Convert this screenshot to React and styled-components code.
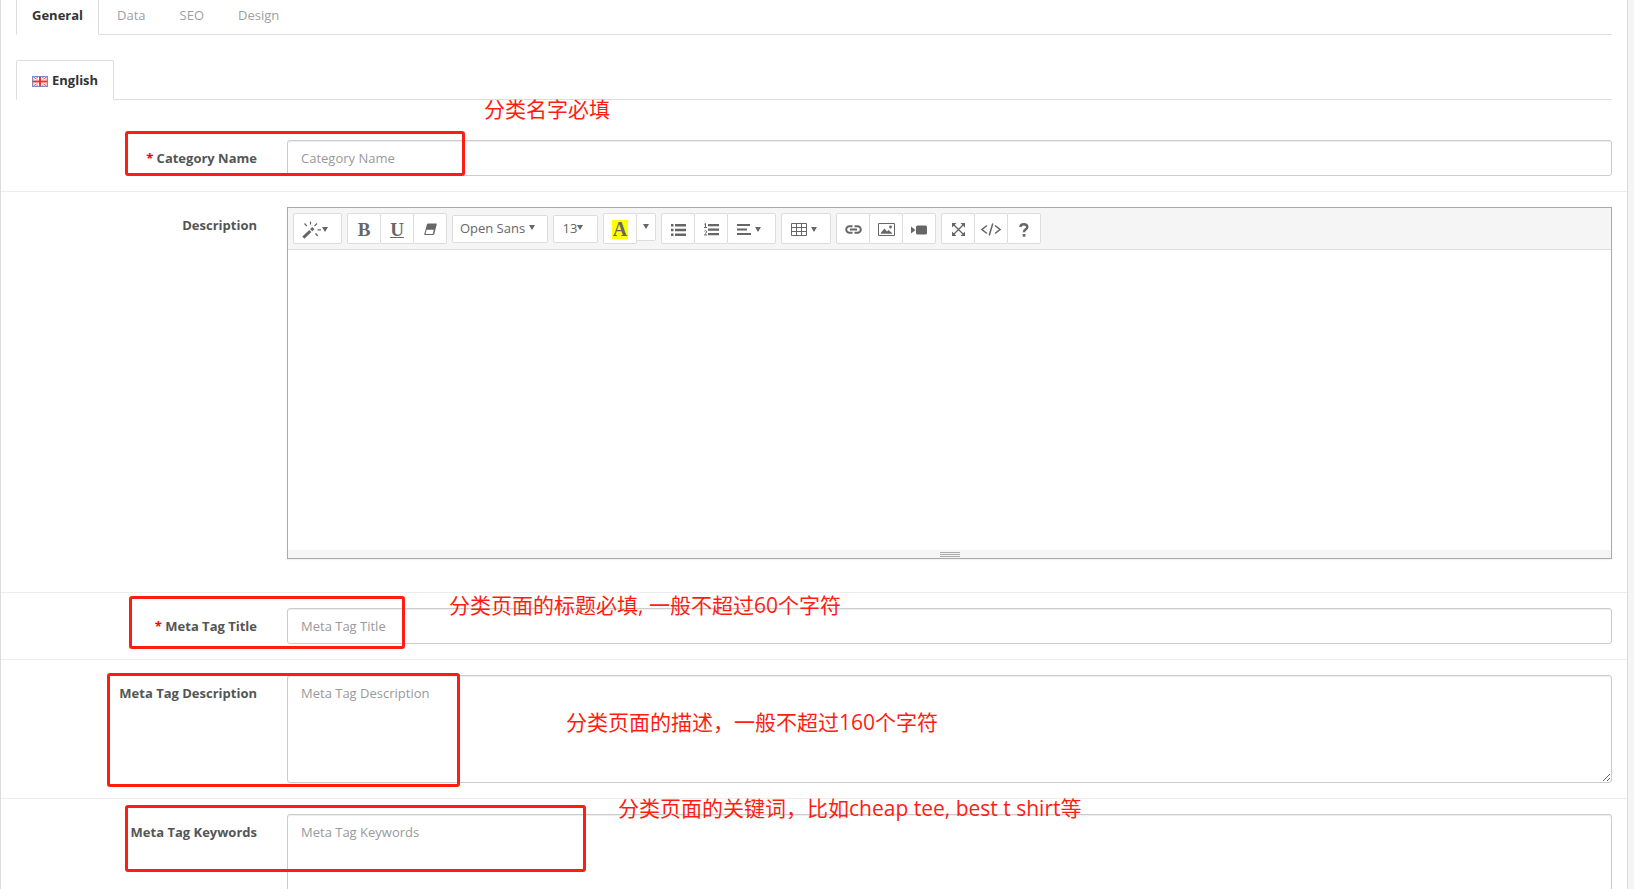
import React from 'react';
import styled, { createGlobalStyle } from 'styled-components';

const GlobalStyle = createGlobalStyle`
  * {
    box-sizing: border-box;
  }

  body {
    margin: 0;
    background: #f5f5f5;
    color: #666;
    font-family: 'Open Sans', 'Noto Sans CJK SC', sans-serif;
    font-size: 13px;
    line-height: 18px;
  }
`;

const Page = styled.div`
  height: 100vh;
  padding-right: 6px;
  overflow: hidden;
`;

const Panel = styled.main`
  position: relative;
  min-height: 100%;
  border: solid #dcdcdc;
  border-width: 0 1px;
  background: #fff;
`;

const Tabs = styled.nav`
  display: flex;
  gap: 2px;
  margin: 0 15px 25px;
  border-bottom: 1px solid #ddd;
`;

const Tab = styled.a`
  display: flex;
  align-items: center;
  gap: 4px;
  margin-bottom: -1px;
  padding: ${p => (p.$flush ? '6px' : '10px')} 15px 10px;
  border: 1px solid ${p => (p.$active ? '#ddd' : 'transparent')};
  border-top-width: ${p => (p.$flush ? 0 : '1px')};
  border-bottom-color: ${p => (p.$active ? '#fff' : 'transparent')};
  border-radius: ${p => (p.$flush ? 0 : '2px 2px 0 0')};
  background: ${p => (p.$active ? '#fff' : 'transparent')};
  color: ${p => (p.$active ? '#333' : '#a0a0a0')};
  font-weight: ${p => (p.$active ? 700 : 400)};
  text-decoration: none;
`;

const FormGroup = styled.div`
  display: grid;
  grid-template-columns: 1fr 5fr;
  padding: 15px 0;

  & + & {
    border-top: 1px solid #ededed;
  }
`;

const Label = styled.label`
  padding: 9px 15px 0;
  color: #555;
  font-weight: 700;
  text-align: right;
  white-space: nowrap;

  &::before {
    content: ${p => (p.$required ? "'* '" : 'none')};
    color: #f00;
  }
`;

const Field = styled.div`
  display: flex;
  flex-direction: column;
  min-width: 0;
  padding: 0 15px;
`;

const Input = styled.input`
  width: 100%;
  height: 36px;
  padding: 8px 13px;
  border: 1px solid #ccc;
  border-radius: 3px;
  background: #fff;
  box-shadow: inset 0 1px 1px rgba(0, 0, 0, 0.075);
  color: #555;
  font: inherit;

  &::placeholder {
    color: #999;
  }
`;

const TextArea = styled(Input).attrs({ as: 'textarea' })`
  display: block;
  height: 108px;
  resize: vertical;
`;

const Editor = styled.div`
  margin-bottom: 18px;
  border: 1px solid #a9a9a9;
  box-shadow: 0 1px 1px rgba(0, 0, 0, 0.05);
`;

const Toolbar = styled.div`
  display: flex;
  flex-wrap: wrap;
  gap: 5px;
  padding: 5px;
  border-bottom: 1px solid #ddd;
  background: #f5f5f5;
`;

const ButtonGroup = styled.div`
  display: flex;
  align-items: ${p => (p.$center ? 'center' : 'flex-start')};
`;

const ToolButton = styled.button`
  display: flex;
  align-items: center;
  justify-content: center;
  gap: ${p => p.$gap || 0}px;
  width: ${p => p.$width || 34}px;
  height: ${p => (p.$short ? 28 : 31)}px;
  padding: ${p => (p.$short ? '0 0 2px' : '2px 0 0')};
  padding-right: ${p => (p.$menu ? 5 : 0)}px;
  border: 1px solid #ddd;
  border-radius: 2px;
  background: #fff;
  color: #666;
  font: inherit;
  cursor: pointer;

  & + & {
    margin-left: -1px;
  }

  &:hover {
    background: #ebebeb;
  }
`;

const Glyph = styled.span`
  padding: 0 1px;
  background: ${p => (p.$highlight ? '#ff0' : 'transparent')};
  font-family: 'Liberation Serif', serif;
  font-size: ${p => (p.$highlight ? 20 : 19)}px;
  font-weight: 700;
  line-height: 19px;
`;

const Caret = styled.span`
  border: solid transparent;
  border-width: 5px 3px 0;
  border-top-color: #666;
`;

const EditArea = styled.div`
  height: 300px;
  outline: 0;
`;

const ResizeBar = styled.div`
  display: flex;
  flex-direction: column;
  align-items: center;
  gap: 1px;
  height: 8px;
  padding-top: 2px;
  background: #f5f5f5;
  cursor: ns-resize;
`;

const ResizeLine = styled.span`
  width: 20px;
  height: 1px;
  background: #a9a9a9;
`;

const Marker = styled.div`
  position: absolute;
  top: ${p => p.$top}px;
  left: ${p => p.$left}px;
  width: ${p => p.$width}px;
  height: ${p => p.$height}px;
  border: 3px solid #ff1d12;
  border-radius: 3px;
  pointer-events: none;
`;

const Note = styled.p`
  position: absolute;
  top: ${p => p.$top}px;
  left: ${p => p.$left}px;
  margin: 0;
  color: #ff1d12;
  font-size: 21px;
  line-height: 28px;
  white-space: nowrap;
  pointer-events: none;
`;

const Svg = styled.svg`
  display: block;
  flex: none;
  fill: currentColor;
`;

const Icon = ({ w = 16, h = 16, children }) => (
  <Svg width={w} height={h} viewBox={`0 0 ${w} ${h}`} aria-hidden="true">
    {children}
  </Svg>
);

const FlagIcon = () => (
  <Svg width="16" height="14" viewBox="0 -3 16 14" aria-hidden="true">
    <path fill="#8fa0dc" d="M0 0h16v11H0z" />
    <path stroke="#fff" strokeWidth="2.6" d="M1 .7l14 9.6M15 .7L1 10.300" />
    <path stroke="#f04a4a" d="M1 .7l14 9.600M15 .7L1 10.300" />
    <path fill="#fff" d="M6 0h4v11H6zM0 3.500h16v4H0z" />
    <path fill="#f63030" d="M7 0h2v11H7zM0 4.500h16v2H0z" />
    <path fill="none" stroke="#7480b8" d="M.5.5h15v10H.5z" opacity=".8" />
  </Svg>
);

const MagicIcon = () => (
  <Icon w={20} h={18}>
    <path d="M.3 15.500l7-6.600 2.100 2.200-7 6.600z" />
    <path d="M8.100 8.100l2.200-2 2.100 2.200-2.200 2z" />
    <path
      fill="none"
      stroke="currentColor"
      strokeWidth="1.200"
      d="M8.500.5v3M2.500 2.500l2.300 2.500M15 2.500l-2.500 2.500M15.500 8.800h3.500M13.500 12.500l2.300 2.500"
    />
  </Icon>
);

const EraserIcon = () => (
  <Icon w={13} h={13}>
    <path
      fillRule="evenodd"
      d="M4 .5h8.200q.8 0 .5.900l-2.500 9.800q-.3.800-1.100.8H.9Q0 12 .3 11.100L3 1.300Q3.200.5 4 .5zM2.600 6.800L1.500 10.900h7.300l1-4.100z"
    />
  </Icon>
);

const BulletListIcon = () => (
  <Icon w={15} h={12}>
    <path d="M0 0h2.500v2.500H0zM0 4.700h2.500v2.500H0zM0 9.500h2.500V12H0zM4 0h11v2.400H4zM4 4.800h11v2.400H4zM4 9.600h11V12H4z" />
  </Icon>
);

const NumberListIcon = () => (
  <Icon w={15} h={13}>
    <path d="M4 1h11v2.200H4zM4 5.500h11v2.200H4zM4 10h11v2.200H4z" />
    <path
      fill="none"
      stroke="currentColor"
      d="M.3 1.300L1.500.5v4M0 4.500h3M.3 8.500q.5-1 1.300-.9 1.200.2.900 1.300Q2 10.300.5 12H3"
    />
  </Icon>
);

const AlignIcon = () => (
  <Icon w={14} h={11}>
    <path d="M0 0h13v2H0zM0 4.500h10v2H0zM0 9h14v2H0z" />
  </Icon>
);

const TableIcon = () => (
  <Icon w={16} h={13}>
    <path fill="none" stroke="currentColor" d="M.5.5h15v12H.5zM0 4.500h16M0 8.500h16M5.500 0v13M10.500 0v13" />
  </Icon>
);

const LinkIcon = () => (
  <Icon w={17} h={9}>
    <path
      fill="none"
      stroke="currentColor"
      strokeWidth="2"
      d="M7.500 7.800H4.500a3.300 3.300 0 0 1 0-6.600h3M9.500 1.200h3a3.300 3.300 0 0 1 0 6.600h-3M5 4.500h7"
    />
  </Icon>
);

const PictureIcon = () => (
  <Icon w={17} h={13}>
    <path fill="none" stroke="currentColor" d="M.5.5h16v12H.5z" />
    <path d="M3 10.800V9.500l3.500-4 2.500 3 1.500-1.500 3.500 3v.8z" />
    <circle cx="12.500" cy="4" r="1.400" />
  </Icon>
);

const VideoIcon = () => (
  <Icon w={16} h={10}>
    <path d="M0 1.500L4.500 5 0 8.500z" />
    <rect x="5" y="0.500" width="11" height="9" rx="1.500" />
  </Icon>
);

const ExpandIcon = () => (
  <Icon w={13} h={13}>
    <path d="M0 0h4.500L0 4.500zM13 0v4.500L8.500 0zM0 13V8.500L4.500 13zM13 13H8.500L13 8.500z" />
    <path fill="none" stroke="currentColor" strokeWidth="1.400" d="M1 1l11 11M12 1L1 12" />
  </Icon>
);

const CodeIcon = () => (
  <Icon w={20} h={13}>
    <path fill="none" stroke="currentColor" strokeWidth="1.500" d="M6 2.500L1 6.500l5 4M14 2.500l5 4-5 4M11.800.5l-3.600 12" />
  </Icon>
);

const HelpIcon = () => (
  <Icon w={10} h={14}>
    <path
      fill="none"
      stroke="currentColor"
      strokeWidth="2.400"
      d="M1.200 4Q1.700 1.200 4.700 1.200 8.300 1.200 8.300 4q0 1.500-1.800 2.600Q5 7.500 5 9.300"
    />
    <path d="M3.700 11h2.700v2.700H3.700z" />
  </Icon>
);

const App = () => (
  <>
    <GlobalStyle />
    <Page>
      <Panel>
        <Tabs>
          <Tab href="#general" $flush $active>General</Tab>
          <Tab href="#data" $flush>Data</Tab>
          <Tab href="#seo" $flush>SEO</Tab>
          <Tab href="#design" $flush>Design</Tab>
        </Tabs>
        <Tabs>
          <Tab href="#english" $active>
            <FlagIcon />
            English
          </Tab>
        </Tabs>

        <form>
          <FormGroup>
            <Label htmlFor="name" $required>Category Name</Label>
            <Field>
              <Input id="name" placeholder="Category Name" />
            </Field>
          </FormGroup>

          <FormGroup>
            <Label id="description-label" as="span">Description</Label>
            <Field>
              <Editor>
                <Toolbar>
                  <ButtonGroup>
                    <ToolButton type="button" aria-label="Style" $width={49} $menu>
                      <MagicIcon />
                      <Caret />
                    </ToolButton>
                  </ButtonGroup>
                  <ButtonGroup>
                    <ToolButton type="button" aria-label="Bold"><Glyph>B</Glyph></ToolButton>
                    <ToolButton type="button" aria-label="Underline"><Glyph as="u">U</Glyph></ToolButton>
                    <ToolButton type="button" aria-label="Remove font style"><EraserIcon /></ToolButton>
                  </ButtonGroup>
                  <ButtonGroup $center>
                    <ToolButton type="button" $width={96} $gap={4} $short $menu>
                      Open Sans
                      <Caret />
                    </ToolButton>
                  </ButtonGroup>
                  <ButtonGroup $center>
                    <ToolButton type="button" $width={45} $short $menu>
                      13
                      <Caret />
                    </ToolButton>
                  </ButtonGroup>
                  <ButtonGroup>
                    <ToolButton type="button" aria-label="Recent color"><Glyph $highlight>A</Glyph></ToolButton>
                    <ToolButton type="button" aria-label="More colors" $width={20} $short><Caret /></ToolButton>
                  </ButtonGroup>
                  <ButtonGroup>
                    <ToolButton type="button" aria-label="Unordered list"><BulletListIcon /></ToolButton>
                    <ToolButton type="button" aria-label="Ordered list"><NumberListIcon /></ToolButton>
                    <ToolButton type="button" aria-label="Paragraph" $width={49} $gap={4} $menu>
                      <AlignIcon />
                      <Caret />
                    </ToolButton>
                  </ButtonGroup>
                  <ButtonGroup>
                    <ToolButton type="button" aria-label="Table" $width={50} $gap={4} $menu>
                      <TableIcon />
                      <Caret />
                    </ToolButton>
                  </ButtonGroup>
                  <ButtonGroup>
                    <ToolButton type="button" aria-label="Link"><LinkIcon /></ToolButton>
                    <ToolButton type="button" aria-label="Picture"><PictureIcon /></ToolButton>
                    <ToolButton type="button" aria-label="Video"><VideoIcon /></ToolButton>
                  </ButtonGroup>
                  <ButtonGroup>
                    <ToolButton type="button" aria-label="Full screen"><ExpandIcon /></ToolButton>
                    <ToolButton type="button" aria-label="Code view"><CodeIcon /></ToolButton>
                    <ToolButton type="button" aria-label="Help"><HelpIcon /></ToolButton>
                  </ButtonGroup>
                </Toolbar>
                <EditArea
                  contentEditable
                  suppressContentEditableWarning
                  role="textbox"
                  aria-labelledby="description-label"
                />
                <ResizeBar>
                  <ResizeLine />
                  <ResizeLine />
                  <ResizeLine />
                </ResizeBar>
              </Editor>
            </Field>
          </FormGroup>

          <FormGroup>
            <Label htmlFor="meta-title" $required>Meta Tag Title</Label>
            <Field>
              <Input id="meta-title" placeholder="Meta Tag Title" />
            </Field>
          </FormGroup>

          <FormGroup>
            <Label htmlFor="meta-description">Meta Tag Description</Label>
            <Field>
              <TextArea id="meta-description" placeholder="Meta Tag Description" />
            </Field>
          </FormGroup>

          <FormGroup>
            <Label htmlFor="meta-keywords">Meta Tag Keywords</Label>
            <Field>
              <TextArea id="meta-keywords" placeholder="Meta Tag Keywords" />
            </Field>
          </FormGroup>
        </form>

        {/* tutorial callouts drawn over the form */}
        <Marker $top={131} $left={124} $width={340} $height={45} />
        <Note $top={95} $left={483}>分类名字必填</Note>
        <Marker $top={596} $left={128} $width={276} $height={53} />
        <Note $top={591} $left={448}>分类页面的标题必填, 一般不超过60个字符</Note>
        <Marker $top={673} $left={106} $width={353} $height={114} />
        <Note $top={708} $left={565}>分类页面的描述，一般不超过160个字符</Note>
        <Marker $top={805} $left={124} $width={461} $height={67} />
        <Note $top={794} $left={617}>分类页面的关键词，比如cheap tee, best t shirt等</Note>
      </Panel>
    </Page>
  </>
);

export default App;
